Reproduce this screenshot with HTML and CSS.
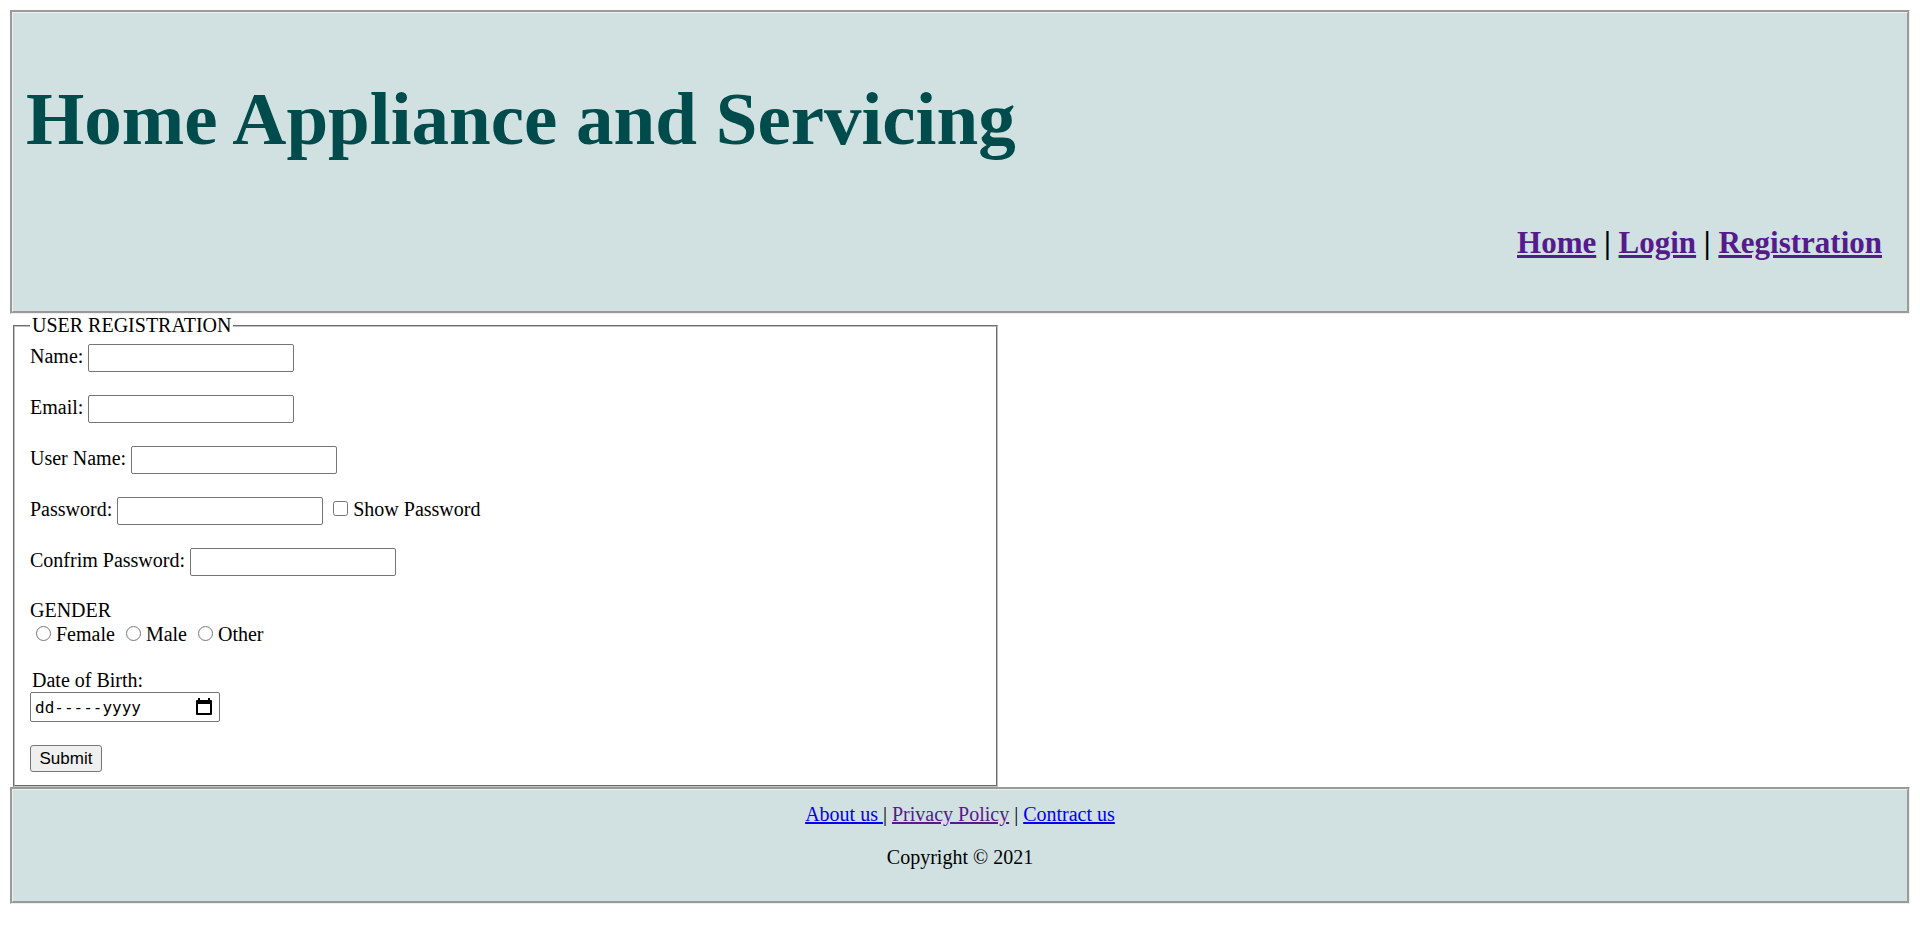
FILE: index.html
```html
<!DOCTYPE html>
<html lang="en">
<head>
<meta charset="utf-8">
<title>User Registration</title>
<link rel="stylesheet" href="styles.css">
</head>
<body>
<header class="panel header">
  <h1 class="title">Home Appliance and Servicing</h1>
  <nav class="nav"><a class="visited" href="#home">Home</a> | <a class="visited" href="#login">Login</a> | <a class="visited" href="#registration">Registration</a></nav>
</header>
<main class="main">
  <form>
    <fieldset class="box">
      <legend class="legend">USER REGISTRATION</legend>
      <div class="rows">
        <div class="row"><label for="name">Name:</label><input class="text" type="text" id="name"></div>
        <div class="row"><label for="email">Email:</label><input class="text" type="text" id="email"></div>
        <div class="row"><label for="username">User Name:</label><input class="text" type="text" id="username"></div>
        <div class="row"><label for="password">Password:</label><input class="text" type="password" id="password"><span class="option show"><input class="mark" type="checkbox" id="show"><label for="show">Show Password</label></span></div>
        <div class="row"><label for="confirm">Confrim Password:</label><input class="text" type="password" id="confirm"></div>
        <div role="radiogroup" aria-labelledby="gender">
          <div id="gender">GENDER</div>
          <div class="options">
            <span class="option"><input class="mark" type="radio" name="gender" id="female"><label for="female">Female</label></span>
            <span class="option"><input class="mark" type="radio" name="gender" id="male"><label for="male">Male</label></span>
            <span class="option"><input class="mark" type="radio" name="gender" id="other"><label for="other">Other</label></span>
          </div>
        </div>
        <div class="birth">
          <label class="birth-label" for="dob">Date of Birth:</label>
          <div class="date">
            <input class="date-text" type="text" id="dob" value="dd-----yyyy">
            <button class="picker" type="button" aria-label="Show date picker">
              <svg width="16" height="18" viewBox="0 0 16 18"><path d="M2 0h2v2h8V0h2v2h1q1 0 1 1v13q0 1-1 1H1q-1 0-1-1V3q0-1 1-1h1zM2 6v9h12V6z" fill="#000" fill-rule="evenodd"/></svg>
            </button>
          </div>
        </div>
        <button class="submit" type="submit">Submit</button>
      </div>
    </fieldset>
  </form>
</main>
<footer class="panel footer">
  <div><a href="#about">About us </a>| <a class="visited" href="#privacy">Privacy Policy</a> | <a href="#contact">Contract us</a></div>
  <div>Copyright © 2021</div>
</footer>
</body>
</html>
```
FILE: styles.css
```css
* { box-sizing: border-box; }
body {
  margin: 10px;
  background: #fff;
  color: #000;
  font: 20px/23px "Liberation Serif", "Times New Roman", serif;
}
a { color: #00e; text-decoration: underline; }
a.visited { color: #551a8b; }
.panel { background: #d1e0e0; border: 3px groove #eee; }
.header { padding: 63px 25px 50px 13px; }
.title {
  margin: 0 0 63px;
  color: #004c4c;
  font-size: 75px;
  line-height: 86px;
}
.nav { font-size: 31px; font-weight: bold; line-height: 36px; text-align: right; }
.main { width: 52%; }
.box {
  margin: 0 0 0 3px;
  padding: 7px 15px 13px;
  border: 2px groove #c0c0c0;
}
.legend { padding: 0 2px; }
.rows { display: flex; flex-direction: column; gap: 23px; }
.row { display: flex; align-items: baseline; gap: 5px; height: 28px; }
.text {
  width: 206px;
  height: 28px;
  margin: 0;
  padding: 2px 3px;
  border: 1px solid #767676;
  border-radius: 2px;
  background: #fff;
  font: 17px "Liberation Sans", Arial, sans-serif;
}
.option { display: flex; align-items: baseline; gap: 5px; }
.show { margin-left: 5px; }
.mark { width: 15px; height: 15px; margin: 0 0 2px; }
.options { display: flex; gap: 11px; padding-left: 6px; line-height: 24px; }
.birth { display: flex; flex-direction: column; align-items: flex-start; }
.birth-label { padding-left: 2px; }
.date {
  display: flex;
  align-items: center;
  width: 190px;
  height: 30px;
  padding: 0 7px 0 4px;
  border: 1px solid #767676;
  border-radius: 2px;
}
.date-text {
  flex: 1;
  min-width: 0;
  padding: 0;
  border: 0;
  background: none;
  color: #000;
  font: 16px "DejaVu Sans Mono", monospace;
}
.picker { display: flex; padding: 0; border: 0; background: none; }
.submit {
  align-self: flex-start;
  width: 72px;
  height: 27px;
  padding: 0;
  border: 1px solid #767676;
  border-radius: 3px;
  background: #efefef;
  color: #000;
  font: 17px "Liberation Sans", Arial, sans-serif;
}
.footer {
  display: flex;
  flex-direction: column;
  gap: 20px;
  padding: 13px 13px 32px;
  text-align: center;
}
```
